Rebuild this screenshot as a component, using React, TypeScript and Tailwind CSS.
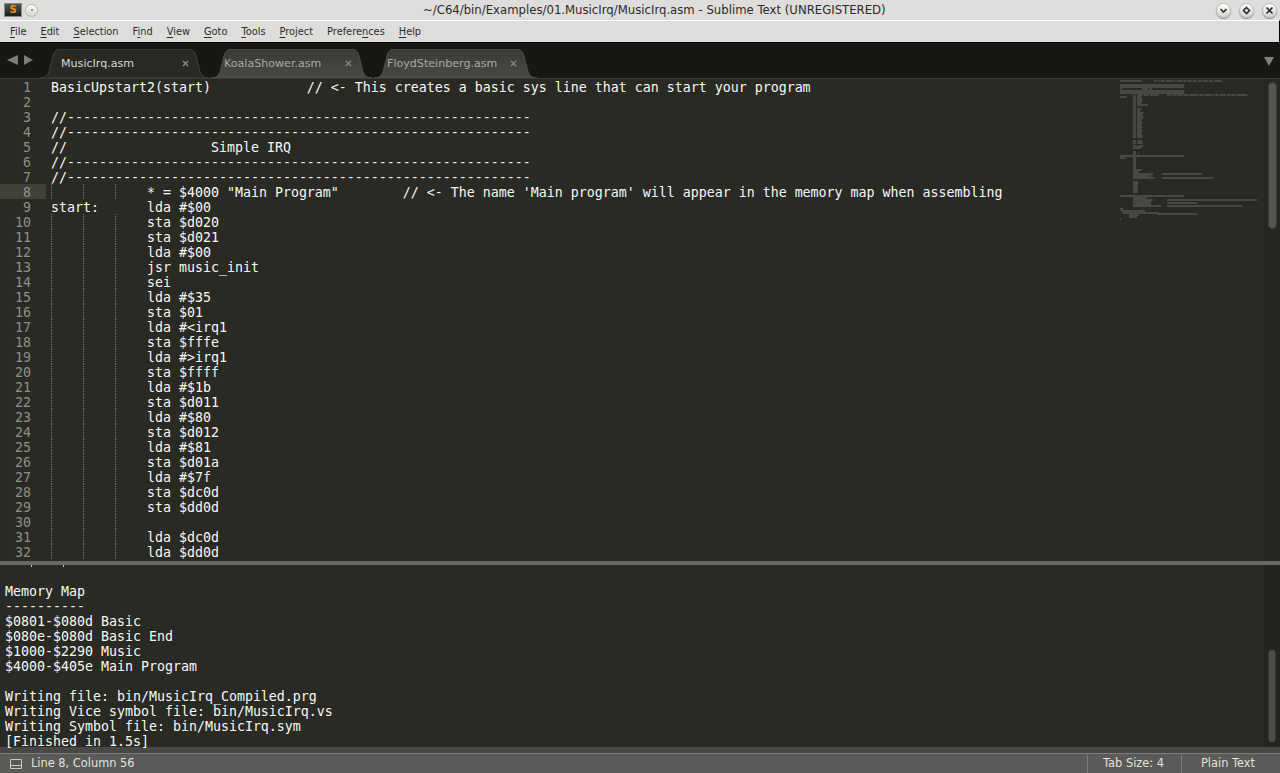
import React from 'react';
import { X } from 'lucide-react';

const DASHES = '//' + '-'.repeat(58);
const CODE: string[] = [
  'BasicUpstart2(start)            // <- This creates a basic sys line that can start your program',
  '',
  DASHES,
  DASHES,
  '//                  Simple IRQ',
  DASHES,
  DASHES,
  '            * = $4000 "Main Program"        // <- The name \'Main program\' will appear in the memory map when assembling',
  'start:      lda #$00',
  '            sta $d020',
  '            sta $d021',
  '            lda #$00',
  '            jsr music_init',
  '            sei',
  '            lda #$35',
  '            sta $01',
  '            lda #<irq1',
  '            sta $fffe',
  '            lda #>irq1',
  '            sta $ffff',
  '            lda #$1b',
  '            sta $d011',
  '            lda #$80',
  '            sta $d012',
  '            lda #$81',
  '            sta $d01a',
  '            lda #$7f',
  '            sta $dc0d',
  '            sta $dd0d',
  '',
  '            lda $dc0d',
  '            lda $dd0d',
];

const OUTPUT: string[] = [
  'Memory Map',
  '----------',
  '$0801-$080d Basic',
  '$080e-$080d Basic End',
  '$1000-$2290 Music',
  '$4000-$405e Main Program',
  '',
  'Writing file: bin/MusicIrq_Compiled.prg',
  'Writing Vice symbol file: bin/MusicIrq.vs',
  'Writing Symbol file: bin/MusicIrq.sym',
  '[Finished in 1.5s]',
];

// x, y, width of the minimap runs below the visible code
const MINIMAP_REST: number[][] = [
  [13, 65, 4], [18, 65, 5], [13, 67, 8],
  [13, 71, 3], [13, 73, 3], [18, 73, 1],
  [0, 75, 64], [0, 77, 5], [13, 77, 3], [13, 79, 3], [13, 81, 3], [13, 83, 3], [13, 85, 3], [13, 87, 3], [13, 89, 9], [13, 91, 6],
  [13, 93, 20], [42, 93, 40], [13, 95, 18], [13, 97, 22], [42, 97, 51],
  [13, 101, 5], [13, 103, 5], [13, 105, 5], [13, 107, 5], [13, 109, 5], [13, 111, 5],
  [0, 115, 3], [3, 115, 61], [13, 117, 14], [13, 119, 20], [47, 119, 90], [13, 121, 18], [47, 122, 30], [13, 123, 18], [13, 125, 28], [47, 125, 75],
  [0, 128, 3], [1, 130, 24], [3, 132, 36], [38, 133, 39], [9, 134, 10], [9, 136, 8], [0, 138, 1],
];

const tabPath = (w: number) =>
  `M0 29 C6 29 8 26 9.5 21 L13 7 C14.5 2 17 0 21 0 L${w - 21} 0 C${w - 17} 0 ${w - 14.5} 2 ${w - 13} 7 L${w - 9.5} 21 C${w - 8} 26 ${w - 6} 29 ${w} 29 Z`;

const Tab = ({ name, width, active }: { name: string; width: number; active?: boolean }) => (
  <div className={`relative flex h-[29px] shrink-0 items-center pl-[15px] pr-[19px] ${active ? 'z-10 text-[#d8d8d2]' : 'text-[#a9a9a4]'}`} style={{ width }}>
    {active ? (
      <svg className="absolute left-[-6px] top-0" width={width + 6} height={29}>
        <path d={tabPath(width + 6)} fill="#2a2a25" stroke="#44443f" strokeWidth="1" />
      </svg>
    ) : (
      <svg className="absolute left-[2px] top-0" width={width - 2} height={29}>
        <defs>
          <linearGradient id="inactiveTab" x1="0" y1="0" x2="0" y2="1">
            <stop offset="0" stopColor="#3a3a37" />
            <stop offset="1" stopColor="#484846" />
          </linearGradient>
        </defs>
        <path d={tabPath(width - 2)} fill="url(#inactiveTab)" stroke="#50504c" strokeWidth="1" />
      </svg>
    )}
    <span className="relative text-[11.1px] leading-none">{name}</span>
    <X size={9} strokeWidth={3.5} className={`relative ml-auto ${active ? 'text-[#8c8c88]' : 'text-[#858581]'}`} />
  </div>
);

const MENU: [string, string, string][] = [
  ['', 'F', 'ile'],
  ['', 'E', 'dit'],
  ['', 'S', 'election'],
  ['F', 'i', 'nd'],
  ['', 'V', 'iew'],
  ['', 'G', 'oto'],
  ['', 'T', 'ools'],
  ['', 'P', 'roject'],
  ['Prefere', 'n', 'ces'],
  ['', 'H', 'elp'],
];

const WinButton = ({ children }: { children?: React.ReactNode }) => (
  <div className="flex h-[15px] w-[15px] items-center justify-center rounded-full border border-[#b9b9b6] bg-gradient-to-b from-white to-[#d4d3d0] shadow-[0_1px_1px_rgba(0,0,0,0.35)]">
    {children}
  </div>
);

const Minimap = () => (
  <svg className="h-full w-[152px] shrink-0" aria-hidden="true">
    {CODE.map((line, i) =>
      Array.from(line.matchAll(/\S+/g)).map((m) => (
        <rect key={`${i}-${m.index}`} x={8 + (m.index ?? 0) * 1.07} y={1.5 + i * 2} width={m[0].length * 1.07} height={1} fill="#f8f8f2" opacity={0.3} />
      )),
    )}
    {MINIMAP_REST.map(([x, y, w], i) => (
      <rect key={i} x={8 + x} y={1.5 + y} width={w} height={1} fill="#f8f8f2" opacity={0.3} />
    ))}
  </svg>
);

const Guide = ({ left }: { left: string }) => (
  <span className={`absolute bottom-0 top-0 w-px bg-[repeating-linear-gradient(to_bottom,#77776f_0,#77776f_1px,transparent_1px,transparent_2px)] ${left}`} />
);

export default function App() {
  const mono = "font-['DejaVu_Sans_Mono',monospace] text-[13.29px] leading-[15px] whitespace-pre text-[#f8f8f2]";
  return (
    <div className="flex h-[773px] w-[1280px] flex-col overflow-hidden bg-[#2a2a25] font-['DejaVu_Sans',sans-serif]">
      {/* window title */}
      <div className="flex h-[20px] shrink-0 items-center bg-[#dedddb] pl-[4px] pr-[3px]">
        <div className="flex h-[14px] w-[18px] items-center justify-center border border-[#8a8a88] bg-gradient-to-b from-[#55554f] to-[#1e1e1c]">
          <span className="text-[10px] font-bold leading-none text-[#f08c1e]">S</span>
        </div>
        <div className="ml-[3px] flex h-[13px] w-[13px] items-center justify-center rounded-full border border-[#b9b9b6] bg-gradient-to-b from-white to-[#d4d3d0]">
          <div className="h-[2px] w-[2px] rounded-full bg-[#777]" />
        </div>
        <span className="ml-[385px] pt-px text-[11.7px] leading-none text-[#2c2c2c]">~/C64/bin/Examples/01.MusicIrq/MusicIrq.asm - Sublime Text (UNREGISTERED)</span>
        <div className="ml-auto flex items-center gap-[8px]">
          <WinButton>
            <svg width="9" height="9" viewBox="0 0 9 9"><path d="M1.5 3 L4.5 6 L7.5 3" fill="none" stroke="#2a2a2a" strokeWidth="1.6" /></svg>
          </WinButton>
          <WinButton>
            <svg width="9" height="9" viewBox="0 0 9 9"><path d="M4.5 1.5 L7.5 4.5 L4.5 7.5 L1.5 4.5 Z" fill="none" stroke="#2a2a2a" strokeWidth="1.6" /></svg>
          </WinButton>
          <WinButton>
            <svg width="9" height="9" viewBox="0 0 9 9"><path d="M1.5 1.5 L7.5 7.5 M7.5 1.5 L1.5 7.5" fill="none" stroke="#2a2a2a" strokeWidth="1.7" /></svg>
          </WinButton>
        </div>
      </div>

      {/* menu */}
      <div className="flex h-[22px] shrink-0 items-center border-r border-r-black border-t border-t-white bg-[#dedddb] pl-[3px] text-[9.8px] text-[#2c2c2c]">
        {MENU.map(([a, u, b]) => (
          <span key={a + u + b} className="px-[7px] leading-none">
            {a}
            <span className="underline underline-offset-2">{u}</span>
            {b}
          </span>
        ))}
      </div>

      {/* tab strip */}
      <div className="flex h-[36px] shrink-0 items-end border-t border-t-black bg-[#171714]">
        <div className="mb-[13px] ml-[7px] flex w-[39px] shrink-0 gap-[6px]">
          <svg width="11" height="10" viewBox="0 0 11 10"><path d="M0 5 L11 0 L11 10 Z" fill="#7c7c78" /></svg>
          <svg width="9" height="10" viewBox="0 0 9 10"><path d="M9 5 L0 0 L0 10 Z" fill="#7c7c78" /></svg>
        </div>
        <Tab name="MusicIrq.asm" width={163} active />
        <Tab name="KoalaShower.asm" width={163} />
        <Tab name="FloydSteinberg.asm" width={165} />
        <svg className="mb-[12px] ml-auto mr-[6px]" width="10" height="9" viewBox="0 0 10 9"><path d="M0 0 L10 0 L5 9 Z" fill="#80807c" /></svg>
      </div>

      {/* editor */}
      <div className="flex min-h-0 flex-1 overflow-hidden border-t border-t-[#3a3a36]">
        <div className="w-[46px] shrink-0 text-right font-['DejaVu_Sans_Mono',monospace] text-[13.29px] leading-[15px] text-[#8f908a]">
          {CODE.map((_, i) => (
            <div key={i} className={`h-[15px] pr-[15px] pt-px ${i === 7 ? 'bg-[#41413a]' : ''}`}>{i + 1}</div>
          ))}
        </div>
        <div className={`min-w-0 flex-1 pl-[5px] ${mono}`}>
          {CODE.map((line, i) => (
            <div key={i} className="relative h-[15px] pt-px">
              {i >= 7 && i !== 8 ? (
                <>
                  <Guide left="left-[0px]" />
                  <Guide left="left-[32px]" />
                  <Guide left="left-[64px]" />
                </>
              ) : null}
              {line}
            </div>
          ))}
        </div>
        <Minimap />
        <div className="w-[16px] shrink-0 bg-[#262622] pt-[3px]">
          <div className="ml-[4px] h-[147px] w-[9px] rounded-full border border-[#3a3a38] bg-[#565654]" />
        </div>
      </div>

      {/* splitter */}
      <div className="h-[4px] shrink-0 bg-[#68686a]" />

      {/* build output */}
      <div className="relative flex h-[182px] shrink-0">
        <span className="absolute left-[31px] top-0 h-[2px] w-px bg-[#9fd6d6]" />
        <span className="absolute left-[63px] top-0 h-[2px] w-px bg-[#9fd6d6]" />
        <div className={`min-w-0 flex-1 pl-[5px] pt-[19px] ${mono}`}>
          {OUTPUT.map((line, i) => (
            <div key={i} className="h-[15px]">{line}</div>
          ))}
        </div>
        <div className="flex w-[16px] shrink-0 flex-col justify-end bg-[#232320] pb-[4px]">
          <div className="ml-[4px] h-[94px] w-[8px] rounded-full border border-[#333331] bg-[#4c4c4a]" />
        </div>
      </div>

      {/* status bar */}
      <div className="h-[6px] shrink-0 bg-[#474745]" />
      <div className="flex h-[20px] shrink-0 items-center border-t border-t-[#7c7c7a] bg-[#5a5a58] pt-px text-[11.4px] leading-none text-[#e2e2de]">
        <svg className="ml-[10px] mr-[9px]" width="12" height="10" viewBox="0 0 12 10">
          <path d="M0.5 0.5 H11.5 V9.5 H0.5 Z M0.5 6.5 H11.5" fill="none" stroke="#c8c8c4" strokeWidth="1" />
        </svg>
        <span>Line 8, Column 56</span>
        <div className="ml-auto flex h-full w-[94px] items-center border-l border-l-[#7c7c7a] pl-[15px]">Tab Size: 4</div>
        <div className="flex h-full w-[99px] items-center border-l border-l-[#7c7c7a] pl-[19px]">Plain Text</div>
      </div>
    </div>
  );
}
